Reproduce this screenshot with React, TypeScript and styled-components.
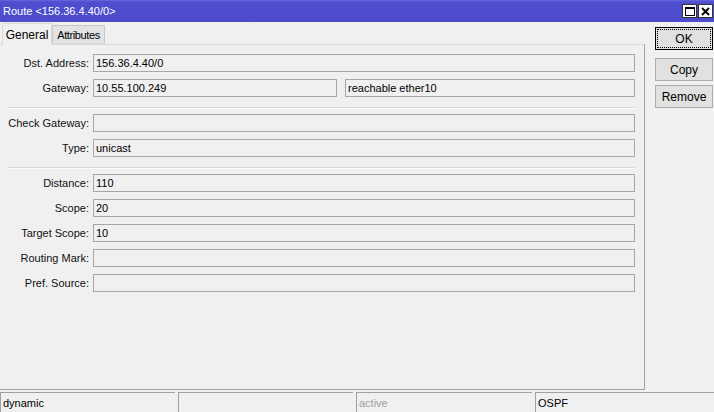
import { createGlobalStyle, styled } from 'styled-components';

const GlobalStyle = createGlobalStyle`
  html, body {
    margin: 0;
    padding: 0;
    background: #f0f0f0;
  }
  body {
    font-family: "Liberation Sans", Arial, sans-serif;
    font-size: 11px;
    color: #000;
  }
`;

interface Field {
  label: string;
  value?: string;
  extra?: string;
}

const groups: Field[][] = [
  [
    { label: 'Dst. Address:', value: '156.36.4.40/0' },
    { label: 'Gateway:', value: '10.55.100.249', extra: 'reachable ether10' }
  ],
  [{ label: 'Check Gateway:' }, { label: 'Type:', value: 'unicast' }],
  [
    { label: 'Distance:', value: '110' },
    { label: 'Scope:', value: '20' },
    { label: 'Target Scope:', value: '10' },
    { label: 'Routing Mark:' },
    { label: 'Pref. Source:' }
  ]
];

const status = [
  { text: 'dynamic', dim: false },
  { text: '', dim: false },
  { text: 'active', dim: true },
  { text: 'OSPF', dim: false }
];

const App = () => {
  return (
    <Window>
      <GlobalStyle />
      <TitleBar>
        <span>Route &lt;156.36.4.40/0&gt;</span>
        <TitleButtons>
          <TitleBtn>
            <svg width="10" height="9" viewBox="0 0 10 9">
              <rect x="0.5" y="0.5" width="9" height="8" fill="none" stroke="#000" />
              <line x1="0" y1="1.5" x2="10" y2="1.5" stroke="#000" />
            </svg>
          </TitleBtn>
          <TitleBtn>
            <svg width="9" height="9" viewBox="0 0 9 9">
              <path d="M1 1 L8 8 M8 1 L1 8" stroke="#000" strokeWidth="2" />
            </svg>
          </TitleBtn>
        </TitleButtons>
      </TitleBar>

      <Body>
        <Main>
          <Tabs>
            <Tab $active $w={50}>
              General
            </Tab>
            <Tab $w={53}>Attributes</Tab>
          </Tabs>
          <Panel>
            {groups.map((group, gi) => (
              <Group key={gi}>
                {gi > 0 && <Separator />}
                {group.map((f) => (
                  <Row key={f.label}>
                    <Label>{f.label}</Label>
                    <Input $split={!!f.extra}>{f.value}</Input>
                    {f.extra && <Input $extra>{f.extra}</Input>}
                  </Row>
                ))}
              </Group>
            ))}
          </Panel>
        </Main>
        <Buttons>
          <Button $default>
            <span>OK</span>
          </Button>
          <Spacer />
          <Button>Copy</Button>
          <Button>Remove</Button>
        </Buttons>
      </Body>

      <StatusBar>
        {status.map((s, i) => (
          <StatusCell key={i} $dim={s.dim}>
            {s.text}
          </StatusCell>
        ))}
      </StatusBar>
    </Window>
  );
};

export default App;

const Window = styled.div`
  width: 714px;
  height: 412px;
  display: flex;
  flex-direction: column;
  background: #f0f0f0;
  overflow: hidden;
`;

const TitleBar = styled.div`
  height: 22px;
  display: flex;
  align-items: center;
  justify-content: space-between;
  padding: 0 1px 0 3px;
  background: linear-gradient(#6767dc 0, #4e4ecf 2px, #4b4bcc 100%);
  color: #fff;
  font-size: 11px;
`;

const TitleButtons = styled.div`
  display: flex;
  gap: 1px;
`;

const TitleBtn = styled.div`
  width: 13px;
  height: 12px;
  background: #fff;
  border: 1px solid #333;
  display: flex;
  align-items: center;
  justify-content: center;
`;

const Body = styled.div`
  flex: 1;
  display: flex;
  padding-bottom: 2px;
`;

const Main = styled.div`
  width: 645px;
  display: flex;
  flex-direction: column;
`;

const Tabs = styled.div`
  height: 22px;
  display: flex;
  align-items: flex-end;
  padding-left: 2px;
`;

const Tab = styled.div<{ $active?: boolean; $w: number }>`
  width: ${(p) => p.$w}px;
  box-sizing: border-box;
  height: ${(p) => (p.$active ? '22px' : '19px')};
  display: flex;
  align-items: center;
  justify-content: center;
  background: ${(p) => (p.$active ? '#f0f0f0' : '#e3e3e3')};
  border: 1px solid ${(p) => (p.$active ? '#d9d9d9' : '#c8c8c8')};
  border-bottom: ${(p) => (p.$active ? 'none' : '1px solid #d9d9d9')};
  margin-bottom: ${(p) => (p.$active ? '-1px' : '0')};
  position: relative;
  font-size: ${(p) => (p.$active ? '12px' : '11px')};
  letter-spacing: ${(p) => (p.$active ? '0' : '-0.4px')};
`;

const Panel = styled.div`
  flex: 1;
  border-top: 1px solid #d9d9d9;
  border-right: 1px solid #a0a0a0;
  border-bottom: 1px solid #a0a0a0;
  padding: 9px 9px 0 0;
  display: flex;
  flex-direction: column;
`;

const Group = styled.div`
  display: flex;
  flex-direction: column;
  gap: 7px;
  margin-bottom: 7px;
`;

const Separator = styled.div`
  height: 1px;
  background: #d9d9d9;
  border-bottom: 1px solid #fcfcfc;
  margin: 3px 0 -2px 8px;
`;

const Row = styled.div`
  display: flex;
  align-items: center;
  height: 18px;
  gap: 4px;
`;

const Label = styled.div`
  width: 89px;
  text-align: right;
  white-space: nowrap;
  color: #111;
`;

const Input = styled.div<{ $split?: boolean; $extra?: boolean }>`
  flex: ${(p) => (p.$split ? '0 0 244px' : '1')};
  height: 18px;
  box-sizing: border-box;
  border: 1px solid #a6a6a6;
  background: #f0f0f0;
  padding: 0 2px;
  display: flex;
  align-items: center;
  margin-left: ${(p) => (p.$extra ? '4px' : '0')};
`;

const Buttons = styled.div`
  flex: 1;
  display: flex;
  flex-direction: column;
  padding: 5px 1px 0 10px;
  gap: 4px;
`;

const Spacer = styled.div`
  height: 0;
`;

const Button = styled.div<{ $default?: boolean }>`
  height: 23px;
  box-sizing: border-box;
  display: flex;
  align-items: center;
  justify-content: center;
  background: #e1e1e1;
  border: 1px solid ${(p) => (p.$default ? '#000' : '#adadad')};
  font-size: 12px;
  padding: 1px;
  span {
    flex: 1;
    align-self: stretch;
    display: flex;
    align-items: center;
    justify-content: center;
    border: 1px dotted #000;
  }
`;

const StatusBar = styled.div`
  height: 20px;
  display: grid;
  grid-template-columns: 175px 175px 176px 1fr;
  gap: 3px;
`;

const StatusCell = styled.div<{ $dim?: boolean }>`
  border-top: 1px solid #a0a0a0;
  border-left: 1px solid #a0a0a0;
  padding-left: 2px;
  display: flex;
  align-items: center;
  color: ${(p) => (p.$dim ? '#a0a0a0' : '#000')};
`;
